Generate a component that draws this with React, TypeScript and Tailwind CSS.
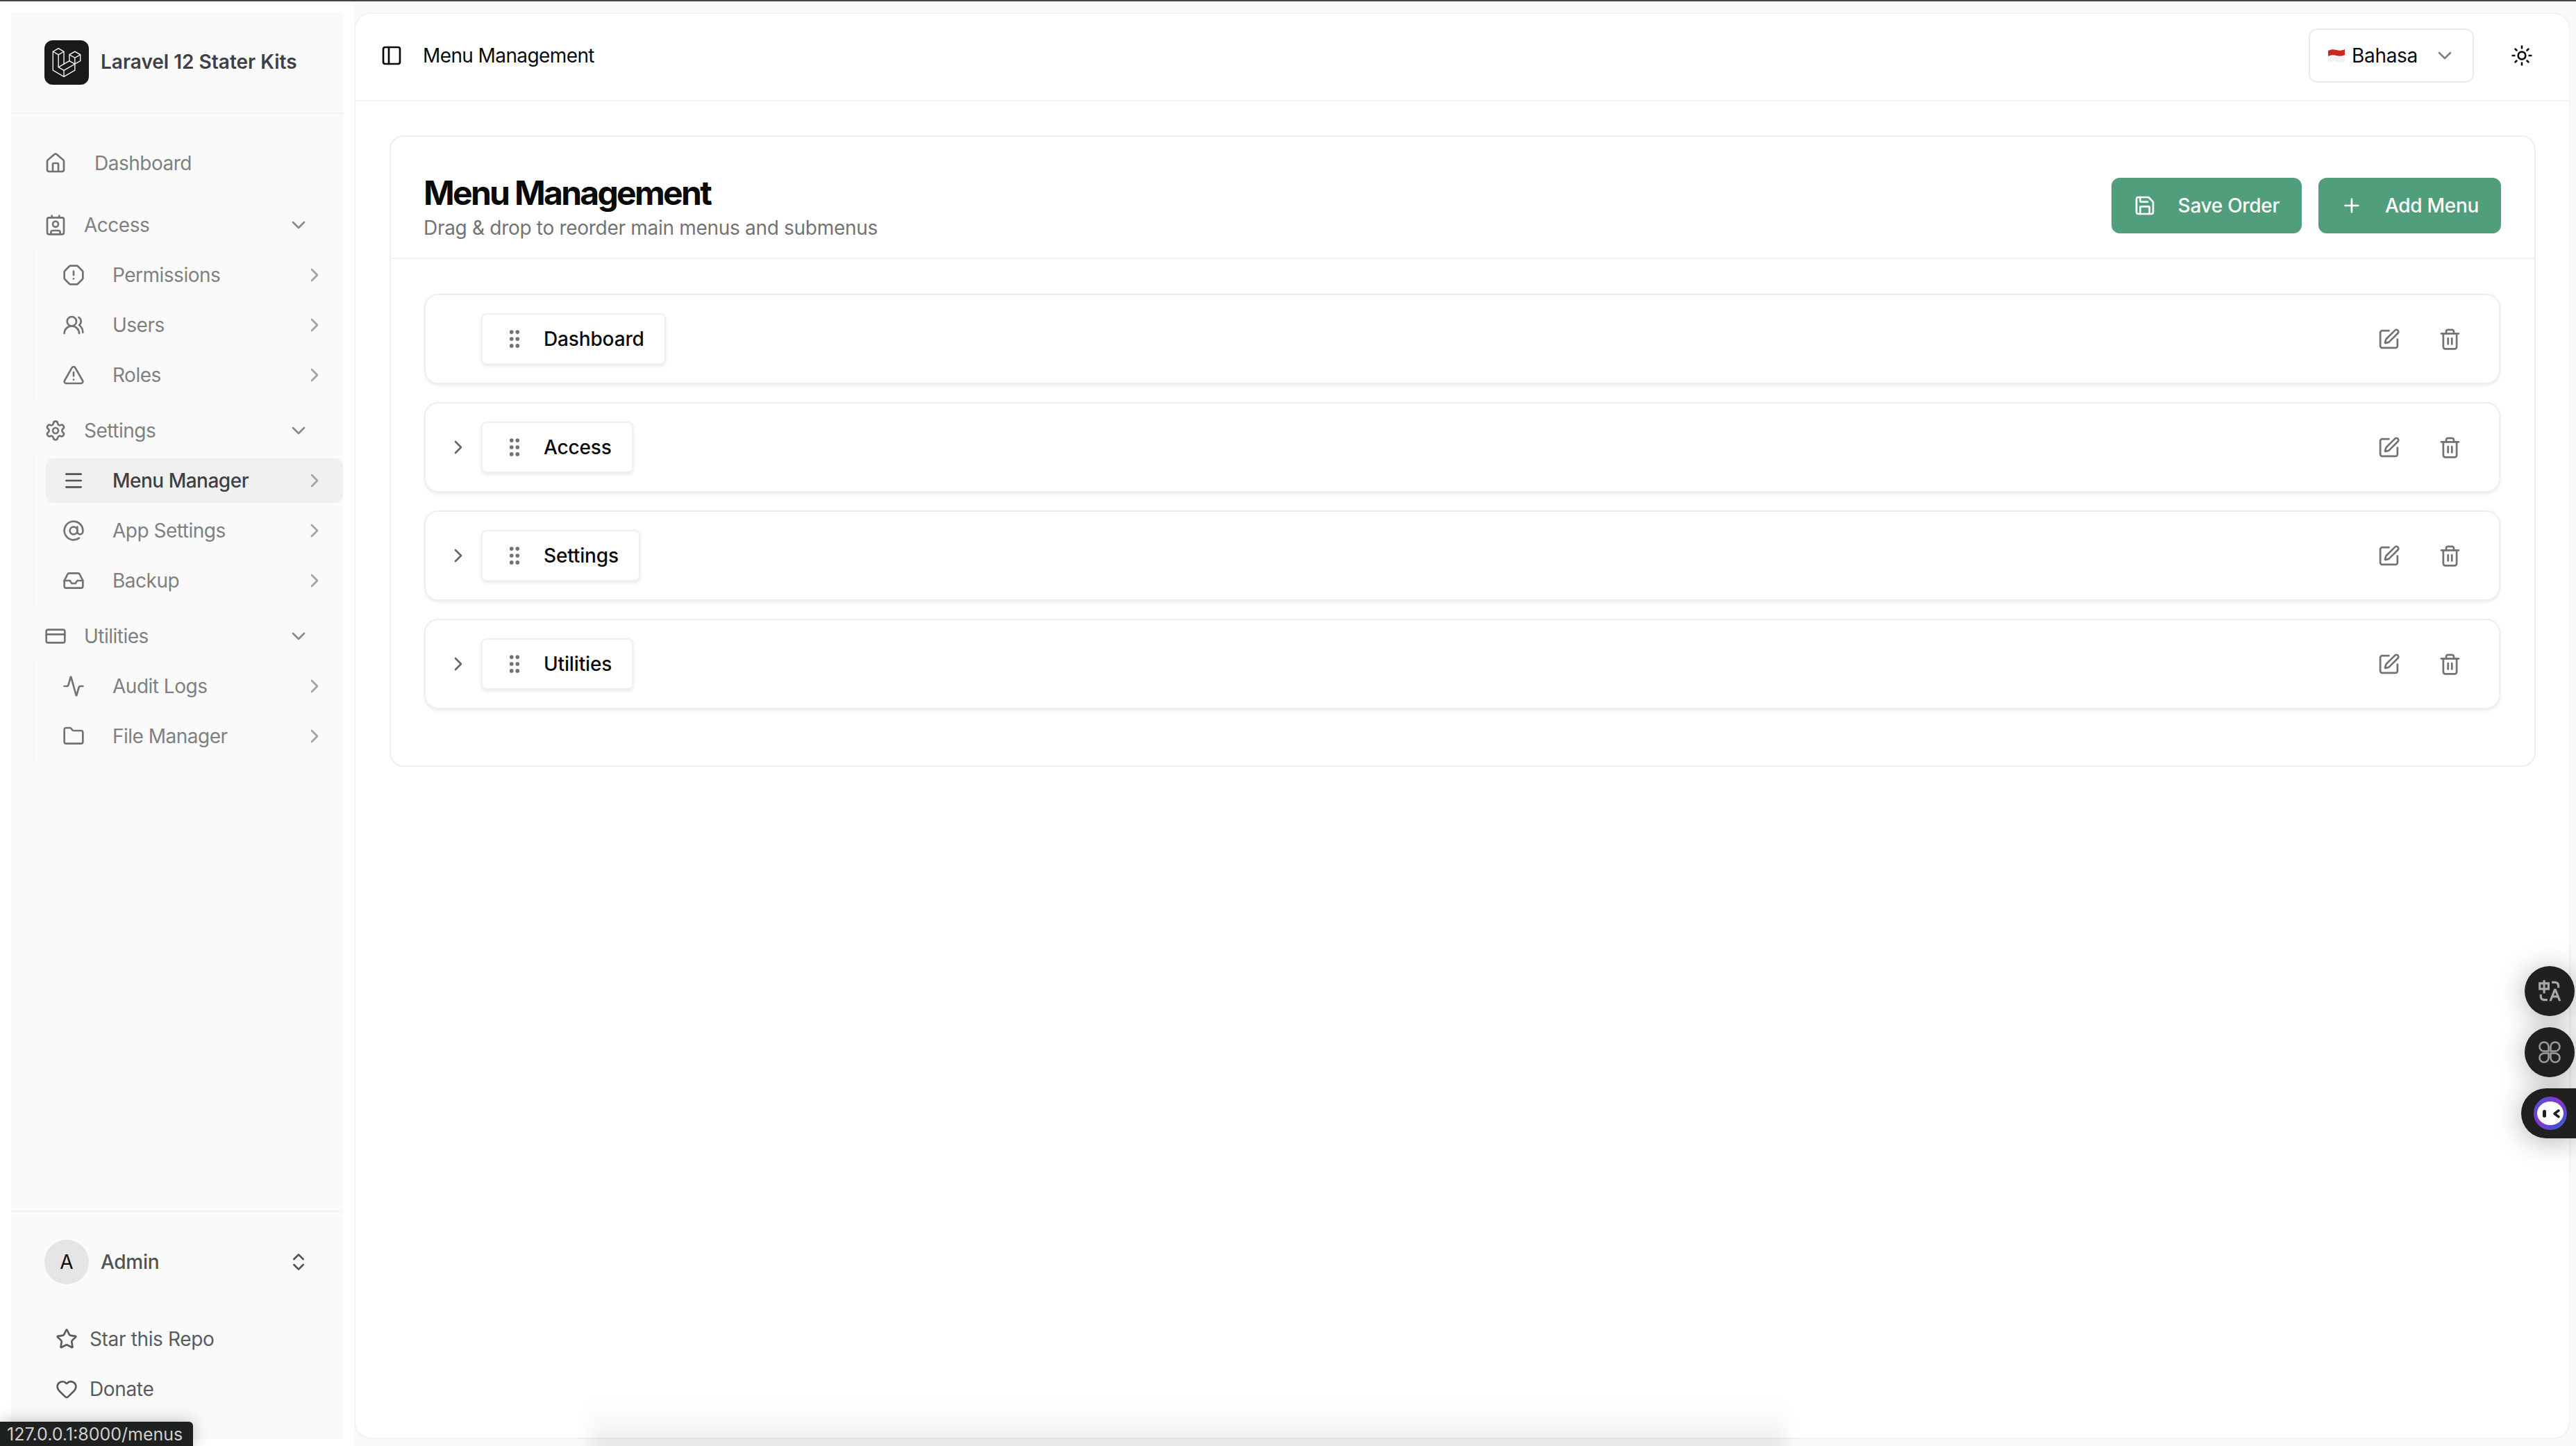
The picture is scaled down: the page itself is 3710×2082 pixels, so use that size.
import {
  Activity,
  AtSign,
  ChevronDown,
  ChevronRight,
  ChevronsUpDown,
  Contact,
  CreditCard,
  Folder,
  GripVertical,
  Heart,
  House,
  Inbox,
  Menu,
  OctagonAlert,
  PanelLeft,
  Plus,
  Save,
  Settings,
  SquarePen,
  Star,
  Sun,
  Trash2,
  TriangleAlert,
  UsersRound,
} from "lucide-react";
import { RiTranslate } from "react-icons/ri";
import { SiLaravel } from "react-icons/si";

const navGroups = [
  {
    title: "Access",
    icon: Contact,
    items: [
      { title: "Permissions", icon: OctagonAlert },
      { title: "Users", icon: UsersRound },
      { title: "Roles", icon: TriangleAlert },
    ],
  },
  {
    title: "Settings",
    icon: Settings,
    items: [
      { title: "Menu Manager", icon: Menu, active: true },
      { title: "App Settings", icon: AtSign },
      { title: "Backup", icon: Inbox },
    ],
  },
  {
    title: "Utilities",
    icon: CreditCard,
    items: [
      { title: "Audit Logs", icon: Activity },
      { title: "File Manager", icon: Folder },
    ],
  },
];

const menuRows = [
  { title: "Dashboard", expandable: false },
  { title: "Access", expandable: true },
  { title: "Settings", expandable: true },
  { title: "Utilities", expandable: true },
];

function Sidebar() {
  return (
    <aside className="flex flex-1 flex-col bg-[#fafafa]">
      <div className="flex items-center gap-[17px] border-b-2 border-[#f3f3f3] pb-[40px] pl-12 pt-[40px]">
        <div className="flex size-16 items-center justify-center rounded-xl bg-[#1a1a1a] text-white">
          <SiLaravel size={42} />
        </div>
        <span className="mb-[3px] text-[28px] font-semibold leading-10 text-[#3f3f46]">Laravel 12 Stater Kits</span>
      </div>

      <nav className="flex-1 pt-[39px] tracking-[-0.5px]">
        <a className="flex h-16 items-center gap-[40px] pl-12 text-[28px] text-[#808080]">
          <House size={32} className="text-[#737373]" />
          Dashboard
        </a>
        <div className="mt-[25px] flex flex-col gap-4">
          {navGroups.map((group) => (
            <div key={group.title}>
              <div className="flex h-16 items-center gap-[25px] pl-12 pr-12 text-[28px] text-[#808080]">
                <group.icon size={32} className="text-[#737373]" />
                <span className="flex-1">{group.title}</span>
                <ChevronDown size={32} className="text-[#8a8a8a]" />
              </div>
              <ul className="ml-8 mt-2 flex flex-col gap-2 border-l-2 border-[#f5f5f5] pl-4">
                {group.items.map((item) => (
                  <li
                    key={item.title}
                    className={`flex h-16 items-center gap-[40px] rounded-xl pl-6 pr-[25px] text-[28px] ${
                      "active" in item ? "bg-[#f0f0f0] font-medium text-[#3f3f46]" : "text-[#808080]"
                    }`}
                  >
                    <item.icon size={32} className={"active" in item ? "text-[#525252]" : "text-[#737373]"} />
                    <span className="flex-1">{item.title}</span>
                    <ChevronRight size={32} className="text-[#a3a3a3]" />
                  </li>
                ))}
              </ul>
            </div>
          ))}
        </div>
      </nav>

      <div className="border-t-2 border-[#f3f3f3] pb-[40px] pt-[40px]">
        <div className="flex items-center gap-[17px] pl-12 pr-12">
          <div className="flex size-16 items-center justify-center rounded-full bg-[#e5e5e5] text-[28px] text-[#0a0a0a]">
            A
          </div>
          <span className="flex-1 text-[28px] font-medium tracking-[-0.3px] text-[#525252]">Admin</span>
          <ChevronsUpDown size={32} className="text-[#525252]" />
        </div>
        <div className="mt-[47px] flex flex-col gap-2 pl-16 text-[28px] tracking-[-0.35px] text-[#5a5a5f]">
          <a className="flex h-16 items-center gap-[17px]">
            <Star size={32} />
            Star this Repo
          </a>
          <a className="flex h-16 items-center gap-[17px]">
            <Heart size={32} />
            Donate
          </a>
        </div>
      </div>
    </aside>
  );
}

function FlagId() {
  return (
    <svg width="26" height="24" viewBox="0 0 26 24">
      <path d="M1 5c4-2 8-2 12-1s8 1 12-1v9c-4 2-8 2-12 1s-8-1-12 1z" fill="#c8281f" />
      <path d="M1 13c4-2 8-2 12-1s8 1 12-1v9c-4 2-8 2-12 1s-8-1-12 1z" fill="#f1f1f1" />
    </svg>
  );
}

function MenuRow({ title, expandable }: { title: string; expandable: boolean }) {
  return (
    <div className="flex h-[130px] items-center rounded-[20px] border-2 border-[#eeeeee] pl-[33px] pr-[54px] shadow-[0_2px_4px_rgba(0,0,0,0.08)]">
      <div className="flex w-7 justify-center">
        {expandable && <ChevronRight size={32} className="shrink-0 text-[#666666]" />}
      </div>
      <div className="ml-[19px] flex h-[74px] items-center gap-[25px] rounded-lg border-2 border-[#f0f0f0] pl-[29px] pr-[29px] shadow-[0_2px_4px_rgba(0,0,0,0.1)]">
        <GripVertical size={34} className="text-[#737373]" />
        <span className="text-[28px] font-medium tracking-[-0.15px] text-[#0a0a0a]">{title}</span>
      </div>
      <div className="ml-auto flex items-center gap-[55px] text-[#737373]">
        <SquarePen size={33} />
        <Trash2 size={33} />
      </div>
    </div>
  );
}

function Content() {
  return (
    <main className="flex-1 rounded-3xl border-2 border-[#f2f2f2] bg-white">
      <header className="flex h-[126px] items-center border-b-2 border-[#f3f3f3] pb-1 pl-[36px] pr-[52px]">
        <PanelLeft size={32} className="text-[#0a0a0a]" />
        <span className="ml-[29px] flex-1 text-[28px] tracking-[-0.6px] text-[#0a0a0a]">Menu Management</span>
        <button className="flex h-[78px] w-[238px] items-center rounded-xl border-2 border-[#ebebeb] pl-[25px] text-[28px] tracking-[-0.3px] text-[#0a0a0a]">
          <FlagId />
          <span className="ml-[9px] flex-1 text-left">Bahasa</span>
          <ChevronDown size={32} className="mr-[24px] text-[#808080]" />
        </button>
        <Sun size={32} className="ml-[53px] text-[#0a0a0a]" />
      </header>

      <div className="pl-[49px] pr-[48px] pt-[49px]">
        <section className="rounded-[20px] border-2 border-[#eeeeee]">
          <div className="flex items-start justify-between border-b-2 border-[#f0f0f0] pl-[47px] pr-[48px] pb-[23px] pt-[53px]">
            <div>
              <h1 className="text-[48px] font-bold leading-[56px] tracking-[-2.7px] text-[#0a0a0a]">Menu Management</h1>
              <p className="mt-[2px] text-[28px] leading-10 tracking-[-0.3px] text-[#737373]">
                Drag &amp; drop to reorder main menus and submenus
              </p>
            </div>
            <div className="mt-[6px] flex gap-6 tracking-[-0.3px]">
              <button className="flex h-20 items-center gap-8 rounded-xl bg-[#509e7c] px-8 text-[28px] font-medium text-white">
                <Save size={32} />
                Save Order
              </button>
              <button className="flex h-20 items-center gap-8 rounded-xl bg-[#509e7c] px-8 text-[28px] font-medium text-white">
                <Plus size={32} />
                Add Menu
              </button>
            </div>
          </div>
          <div className="flex flex-col gap-[26px] pl-[48px] pr-[49px] pb-[81px] pt-[50px]">
            {menuRows.map((row) => (
              <MenuRow key={row.title} title={row.title} expandable={row.expandable} />
            ))}
          </div>
        </section>
      </div>
    </main>
  );
}

function FloatingTools() {
  return (
    <>
      <div className="absolute left-[3636px] top-[1391px] flex size-[72px] items-center justify-center rounded-full bg-[#202020] text-[#a8a8a8] shadow-[0_4px_40px_rgba(0,0,0,0.3)]">
        <RiTranslate size={38} />
      </div>
      <div className="absolute left-[3636px] top-[1479px] flex size-[72px] items-center justify-center rounded-full bg-[#202020] text-[#9a9a9a] shadow-[0_4px_40px_rgba(0,0,0,0.3)]">
        <svg width="32" height="32" viewBox="0 0 32 32" fill="none" stroke="currentColor" strokeWidth="2.6" strokeLinejoin="round">
          <path d="M14.5 14.5H8a6.5 6.5 0 1 1 6.5-6.5z" />
          <path d="M17.5 14.5V8a6.5 6.5 0 1 1 6.5 6.5z" />
          <path d="M14.5 17.5V24A6.5 6.5 0 1 1 8 17.5z" />
          <path d="M17.5 17.5H24a6.5 6.5 0 1 1-6.5 6.5z" />
        </svg>
      </div>
      <div className="absolute left-[3631px] top-[1567px] flex h-[72px] w-[79px] items-center rounded-l-full bg-[#202020] pl-[18px] shadow-[0_4px_40px_rgba(0,0,0,0.3)]">
        <svg width="48" height="48" viewBox="0 0 48 48">
          <defs>
            <linearGradient id="ring" x1="0" y1="0" x2="1" y2="1">
              <stop offset="0" stopColor="#3b5bdb" />
              <stop offset="0.45" stopColor="#8a35c9" />
              <stop offset="0.8" stopColor="#4a4fd0" />
              <stop offset="1" stopColor="#38b6c8" />
            </linearGradient>
          </defs>
          <circle cx="24" cy="24" r="24" fill="url(#ring)" />
          <ellipse cx="24" cy="24" rx="19" ry="17" fill="#ffffff" />
          <rect x="13" y="19" width="5" height="11" rx="2.5" fill="#202020" />
          <path d="M36 20l-6 4.5 6 4.5" fill="none" stroke="#202020" strokeWidth="3.5" strokeLinecap="round" strokeLinejoin="round" />
        </svg>
      </div>
    </>
  );
}

export default function App() {
  return (
    <div className="relative flex h-screen flex-col overflow-hidden bg-white font-['Inter',sans-serif]">
      <div className="h-[2px] bg-[#444444]" />
      <div className="flex min-h-0 flex-1">
        <div className="flex w-[510px] bg-white pb-[10px] pl-4 pr-4 pt-4">
          <Sidebar />
        </div>
        <div className="flex flex-1 bg-[#fafafa] pb-[10px] pr-2 pt-4">
          <Content />
        </div>
      </div>

      {/* dock shadow coming in from under the window */}
      <div className="absolute bottom-[-10px] left-[850px] h-[80px] w-[1720px] bg-gradient-to-t from-black/12 via-black/3 via-45% to-transparent blur-[12px]" />

      <FloatingTools />

      {/* browser link preview */}
      <div className="absolute bottom-0 left-0 flex h-[35px] w-[278px] items-center rounded-tr-md bg-[#1f2120] pl-[10px] pt-[2px] text-[25px] text-[#cfcfcf] shadow-[0_0_24px_rgba(0,0,0,0.25)]">
        127.0.0.1:8000/menus
      </div>
    </div>
  );
}
